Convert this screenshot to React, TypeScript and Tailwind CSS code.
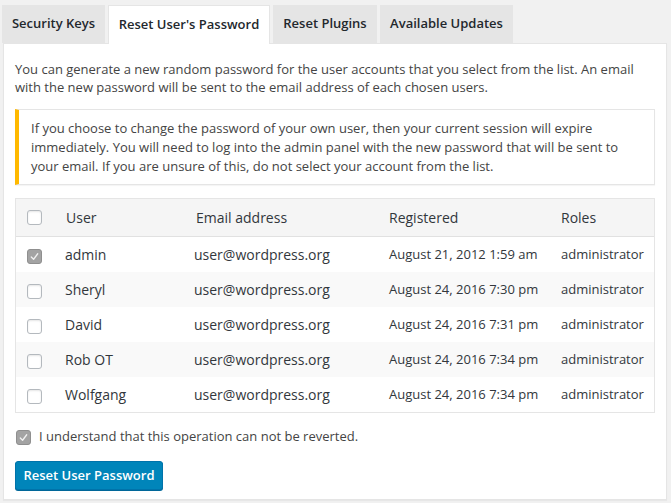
import React from "react";

// DATA
const users = [
  { name: "admin", email: "user@wordpress.org", registered: "August 21, 2012 1:59 am", role: "administrator", checked: true },
  { name: "Sheryl", email: "user@wordpress.org", registered: "August 24, 2016 7:30 pm", role: "administrator", checked: false },
  { name: "David", email: "user@wordpress.org", registered: "August 24, 2016 7:31 pm", role: "administrator", checked: false },
  { name: "Rob OT", email: "user@wordpress.org", registered: "August 24, 2016 7:34 pm", role: "administrator", checked: false },
  { name: "Wolfgang", email: "user@wordpress.org", registered: "August 24, 2016 7:34 pm", role: "administrator", checked: false },
];

const tabs = [
  { label: "Security Keys", width: "w-[103px]", active: false },
  { label: "Reset User's Password", width: "w-[162px]", active: true },
  { label: "Reset Plugins", width: "w-[104px]", active: false },
  { label: "Available Updates", width: "w-[133px]", active: false },
];

function Checkbox({ checked }: { checked: boolean }) {
  if (checked) {
    return (
      <span className="flex h-[15px] w-[15px] items-center justify-center rounded-[3px] border border-[#8f8f8f] bg-[#a3a3a3]">
        <svg width="11" height="11" viewBox="0 0 12 12" fill="none">
          <path d="M2.5 6.5 L5 9 L9.5 3" stroke="#f1f1f1" strokeWidth="1.4" strokeLinecap="round" strokeLinejoin="round" />
        </svg>
      </span>
    );
  }
  return (
    <span className="block h-[15px] w-[15px] rounded-[3px] border border-[#b4b9be] bg-white shadow-[inset_0_1px_2px_rgba(0,0,0,0.1)]" />
  );
}

export default function App() {
  return (
    <div className="min-h-[503px] bg-[#f1f1f1] pt-[5px] font-['Open_Sans',sans-serif] text-[#444]">
      {/* TABS */}
      <div className="ml-[2px] flex gap-[3px]">
        {tabs.map((tab) => (
          <div
            key={tab.label}
            className={`${tab.width} relative flex h-[38px] items-center justify-center text-[13px] font-semibold text-[#23282d] ${
              tab.active ? "z-10 -mb-px h-[39px] border border-b-0 border-[#e5e5e5] bg-white" : "bg-[#e5e5e5]"
            }`}
          >
            {tab.label}
          </div>
        ))}
      </div>

      {/* PANEL */}
      <div className="ml-[3px] w-[664px] border border-[#e5e5e5] bg-white px-[11px] pb-[9px] pt-[16px] shadow-[0_1px_1px_rgba(0,0,0,0.04)]">
        <p className="text-[13px] leading-[18px]">
          You can generate a new random password for the user accounts that you select from the list. An email with the new password will be sent to the email address of each chosen users.
        </p>

        {/* WARNING */}
        <div className="mt-[13px] w-[640px] border border-l-[4px] border-[#e5e5e5] border-l-[#ffb900] pb-[8px] pl-[12px] pr-[12px] pt-[9px] text-[13px] leading-[19px] shadow-[0_1px_1px_rgba(0,0,0,0.04)]">
          If you choose to change the password of your own user, then your current session will expire immediately. You will need to log into the admin panel with the new password that will be sent to your email. If you are unsure of this, do not select your account from the list.
        </div>

        {/* TABLE */}
        <div className="mt-[13px] w-[640px] border border-[#e5e5e5] text-[#32373c]">
          <div className="grid h-[38px] grid-cols-[41px_130px_193px_172px_1fr] items-center border-b border-[#e1e1e1] bg-[#f5f5f5] text-[14px]">
            <div className="pl-[11px]">
              <Checkbox checked={false} />
            </div>
            <div className="pl-[9px]">User</div>
            <div className="pl-[9px]">Email address</div>
            <div className="pl-[9px]">Registered</div>
            <div className="pl-[9px]">Roles</div>
          </div>
          {users.map((u, i) => (
            <div
              key={u.name}
              className={`grid h-[35px] grid-cols-[41px_130px_193px_172px_1fr] items-center ${i % 2 === 1 ? "bg-[#f9f9f9]" : "bg-white"}`}
            >
              <div className="pl-[11px] pt-[3px]">
                <Checkbox checked={u.checked} />
              </div>
              <div className="pl-[8px] text-[14px]">{u.name}</div>
              <div className="pl-[7px] text-[14px]">{u.email}</div>
              <div className="pl-[9px] text-[13px]">{u.registered}</div>
              <div className="pl-[9px] text-[13px]">{u.role}</div>
            </div>
          ))}
        </div>

        {/* CONFIRM */}
        <label className="mt-[15px] flex h-[18px] items-center gap-[8px] pl-[1px] text-[13px]">
          <Checkbox checked={true} />
          <span>I understand that this operation can not be reverted.</span>
        </label>

        <button
          type="submit"
          className="mt-[15px] flex h-[29px] w-[148px] items-center justify-center rounded-[3px] border border-[#0073aa] bg-[#0085ba] text-[13px] font-semibold text-white shadow-[0_1px_0_#006799]"
        >
          Reset User Password
        </button>
      </div>
    </div>
  );
}
